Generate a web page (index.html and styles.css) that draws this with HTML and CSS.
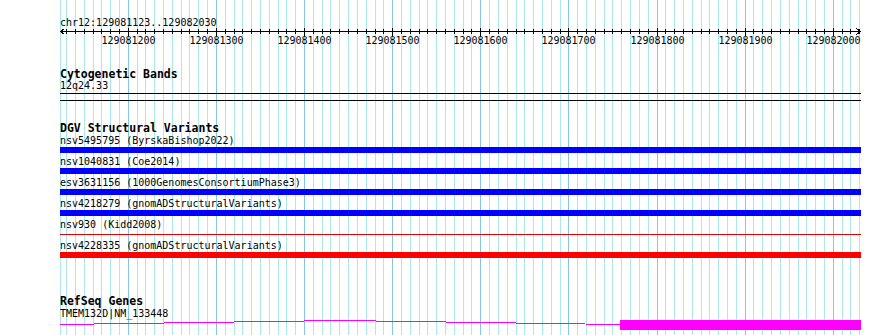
FILE: index.html
```html
<!DOCTYPE html>
<html lang="en">
<head>
  <meta charset="UTF-8">
  <title>Genome view</title>
  <link rel="stylesheet" href="styles.css">
</head>
<body>
  <div class="view">
    <!-- background grid, filled by the script -->
    <svg class="grid" id="grid" width="801" height="335"></svg>

    <div class="ruler">
      <div class="locus">chr12:129081123..129082030</div>
      <svg class="scale" id="scale" width="801" height="20">
        <line class="axis" x1="0" y1="3.5" x2="801" y2="3.5" />
        <polyline class="arrow" points="4.5,0.5 0.5,3.5 4.5,6.5" />
        <polyline class="arrow" points="796.5,0.5 800.5,3.5 796.5,6.5" />
      </svg>
    </div>

    <section class="track cyto">
      <h2 class="track-title">Cytogenetic Bands</h2>
      <div class="label">12q24.33</div>
      <div class="band"></div>
    </section>

    <section class="track dgv">
      <h2 class="track-title">DGV Structural Variants</h2>
      <div class="feature">
        <div class="label">nsv5495795 (ByrskaBishop2022)</div>
        <div class="bar blue"></div>
      </div>
      <div class="feature">
        <div class="label">nsv1040831 (Coe2014)</div>
        <div class="bar blue"></div>
      </div>
      <div class="feature">
        <div class="label">esv3631156 (1000GenomesConsortiumPhase3)</div>
        <div class="bar blue"></div>
      </div>
      <div class="feature">
        <div class="label">nsv4218279 (gnomADStructuralVariants)</div>
        <div class="bar blue"></div>
      </div>
      <div class="feature">
        <div class="label">nsv930 (Kidd2008)</div>
        <div class="bar thin"></div>
      </div>
      <div class="feature">
        <div class="label">nsv4228335 (gnomADStructuralVariants)</div>
        <div class="bar red"></div>
      </div>
    </section>

    <section class="track refseq">
      <h2 class="track-title">RefSeq Genes</h2>
      <div class="label">TMEM132D|NM_133448</div>
      <svg class="gene" width="801" height="12">
        <polyline class="intron" points="0,5.5 280,1.5 560,5.5" />
        <rect class="exon" x="560" y="1" width="241" height="10" />
      </svg>
    </section>
  </div>

  <script>
    const SVG_NS = 'http://www.w3.org/2000/svg';
    // 129081200 sits at x=68.3 inside the view, 10 bases = 8.8125px
    const ORIGIN = 68.3;
    const STEP = 8.8125;

    function addLine(svg, cls, x1, y1, x2, y2) {
      const line = document.createElementNS(SVG_NS, 'line');
      line.setAttribute('class', cls);
      line.setAttribute('x1', x1);
      line.setAttribute('y1', y1);
      line.setAttribute('x2', x2);
      line.setAttribute('y2', y2);
      svg.appendChild(line);
    }

    window.addEventListener('DOMContentLoaded', () => {
      const grid = document.getElementById('grid');
      const scale = document.getElementById('scale');

      addLine(grid, 'minor', 0.5, 0, 0.5, 335);

      for (let n = -7; n <= 83; n++) {
        const x = Math.floor(ORIGIN + STEP * n) + 0.5;
        const major = n % 10 === 0;
        addLine(grid, major ? 'major' : 'minor', x, 0, x, 335);
        addLine(scale, 'tick', x, major ? 0 : 1, x, major ? 8 : 6);

        if (major) {
          const label = document.createElementNS(SVG_NS, 'text');
          label.setAttribute('x', x);
          label.setAttribute('y', 15.5);
          label.textContent = 129081200 + 10 * n;
          scale.appendChild(label);
        }
      }
    });
  </script>
</body>
</html>
```

FILE: styles.css
```css
html, body { margin: 0; padding: 0; background: #fff; }
body { font-family: "DejaVu Sans Mono", "Liberation Mono", monospace; font-size: 10px; color: #000; overflow: hidden; }

.view { position: relative; margin-left: 60px; width: 801px; height: 335px; overflow: hidden; }

/* grid sits under every track */
.grid { position: absolute; left: 0; top: 0; z-index: 0; shape-rendering: crispEdges; }
.grid .minor { stroke: #aae8ee; stroke-width: 1; }
.grid .major { stroke: #84c6e4; stroke-width: 1; }

.ruler, .track { position: relative; z-index: 1; }

/* ruler */
.ruler { padding-top: 17px; }
.locus { line-height: 11px; white-space: nowrap; }
.scale { display: block; overflow: visible; shape-rendering: crispEdges; }
.scale .axis, .scale .tick { stroke: #000; stroke-width: 1; }
.scale .arrow { fill: none; stroke: #000; stroke-width: 1; }
.scale text { font-family: "DejaVu Sans Mono", "Liberation Mono", monospace; font-size: 10px; text-anchor: middle; fill: #000; }

/* tracks */
.track-title { margin: 0; font-size: 11.5px; line-height: 12px; font-weight: bold; white-space: nowrap; }
.label { line-height: 11px; white-space: nowrap; }

.cyto { margin-top: 20px; }
.band { margin-top: 2px; height: 6px; border-top: 1px solid #000; border-bottom: 1px solid #000; }

.dgv { margin-top: 21px; }
.dgv .track-title { margin-bottom: 1px; }
.feature .label { margin-bottom: 1px; }
.bar { height: 6px; margin-bottom: 3px; }
.bar.blue { background: #0000ff; }
.bar.red { background: #ff0000; }
.bar.thin { height: 1px; margin: 4px 0 5px; background: #e00000; }

.refseq { margin-top: 37px; }
.refseq .track-title { margin-bottom: 1px; }
.gene { display: block; shape-rendering: crispEdges; }
.gene .intron { fill: none; stroke: #ff00ff; stroke-width: 1; }
.gene .exon { fill: #ff00ff; }
```
